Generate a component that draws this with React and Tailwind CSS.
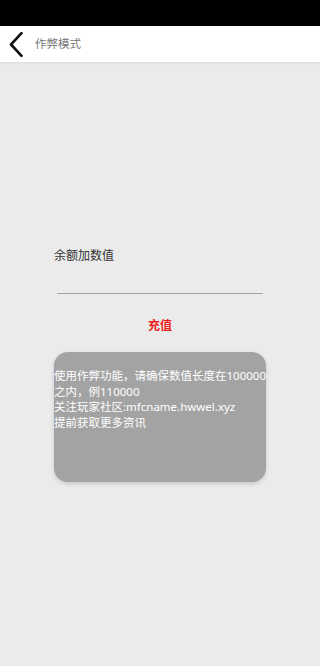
import React from "react";

export default function App() {
  return (
    <div
      className="w-[320px] h-[666px] bg-[#ebebeb] flex flex-col overflow-hidden"
      style={{ fontFamily: '"Noto Sans", "Noto Sans CJK SC", sans-serif' }}
    >
      <div className="h-[26px] bg-black shrink-0" />
      <div className="h-[36px] bg-white flex items-center shrink-0 relative z-10 shadow-[0_1px_2px_rgba(0,0,0,0.08)]">
        <svg width="14" height="25" viewBox="0 0 14 25" className="ml-[9px]">
          <path d="M12.5 1.2 L2 12.5 L12.5 23.8" fill="none" stroke="#111" strokeWidth="2.6" strokeLinecap="round" strokeLinejoin="round" />
        </svg>
        <span className="ml-[12px] text-[11.5px] text-[#777]">作弊模式</span>
      </div>
      <div className="pt-[186px] px-[54px]">
        <div className="text-[12px] leading-[16px] text-[#333]">余额加数值</div>
        <div className="mx-[3px] h-[29.5px] border-b-[1.5px] border-[#a3a3a3]" />
        <div className="mt-[24px] text-center text-[12px] leading-[16px] font-bold text-[#ee1c1c]">充值</div>
        <div className="mt-[18px] h-[130px] rounded-[14px] bg-[#a3a3a3] shadow-[0_2px_4px_rgba(0,0,0,0.15)] text-white text-[11.5px] leading-[15.5px] pt-[16.5px]">
          <div className="whitespace-nowrap">使用作弊功能，请确保数值长度在100000</div>
          <div className="whitespace-nowrap">之内，例110000</div>
          <div className="whitespace-nowrap">关注玩家社区:mfcname.hwwel.xyz</div>
          <div className="whitespace-nowrap">提前获取更多资讯</div>
        </div>
      </div>
    </div>
  );
}
